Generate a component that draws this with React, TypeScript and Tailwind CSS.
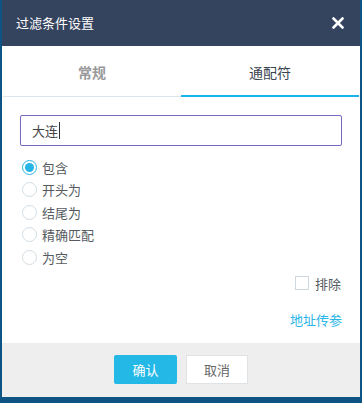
import React from 'react';

const font = { fontFamily: '"Noto Sans CJK SC", "Liberation Sans", sans-serif' };

const options = ['包含', '开头为', '结尾为', '精确匹配', '为空'];

const Radio = ({ checked, label }: { checked?: boolean; label: string }) => (
  <label className="flex items-center h-[22.5px] gap-[5px]">
    <span
      className={`w-[15px] h-[15px] rounded-full border flex items-center justify-center bg-white ${
        checked ? 'border-[#27b5e6]' : 'border-[#d3dde2]'
      }`}
    >
      {checked && <span className="w-[9px] h-[9px] rounded-full bg-[#27b5e6]" />}
    </span>
    <span className="text-[13px] text-[#555b61] leading-none">{label}</span>
  </label>
);

export default function App() {
  return (
    <div className="w-[362px] h-[403px] bg-[#0d5485] flex flex-col overflow-hidden" style={font}>
      <div className="mx-[2px] h-[397px] bg-white flex flex-col">
        {/* header */}
        <div className="h-[46px] bg-[#35445e] flex items-center justify-between pl-[14px] pr-[15px]">
          <span className="text-white text-[13px]">过滤条件设置</span>
          <svg width="12" height="12" viewBox="0 0 12 12" className="mr-[1px]">
            <path d="M1.5 1.5 L10.5 10.5 M10.5 1.5 L1.5 10.5" stroke="#fff" strokeWidth="2.6" strokeLinecap="round" />
          </svg>
        </div>

        {/* tabs */}
        <div className="flex h-[51px] mx-[1px]">
          <div className="flex-1 flex items-center justify-center border-b border-[#dde5ea] text-[14px] text-[#999] font-bold pt-[3px]">
            常规
          </div>
          <div className="flex-1 flex items-center justify-center border-b-2 border-[#1ab3ec] text-[14px] text-[#3a4550] pt-[4px]">
            通配符
          </div>
        </div>

        {/* body */}
        <div className="flex-1 flex flex-col px-[18px] pt-[18px]">
          <div className="h-[31px] border border-[#7767c1] rounded-[2px] flex items-center pl-[11px] text-[13px] text-[#444]">
            大连<span className="w-px h-[17px] bg-[#333] ml-[1px]" />
          </div>

          <div className="flex flex-col mt-[10px] pl-[2px]">
            {options.map((o, i) => (
              <Radio key={o} label={o} checked={i === 0} />
            ))}
          </div>

          <div className="flex justify-end items-center gap-[6px] mt-[5px] pr-[1px]">
            <span className="w-[14px] h-[14px] border border-[#cfd9dd] bg-white" />
            <span className="text-[13px] text-[#555b61]">排除</span>
          </div>

          <div className="flex justify-end mt-[17px]">
            <span className="text-[13px] text-[#2bb5e8]">地址传参</span>
          </div>
        </div>

        {/* footer */}
        <div className="h-[54px] bg-[#eeeeee] flex items-center justify-center gap-[9px] pb-[1px]">
          <button className="w-[63px] h-[29px] bg-[#23b8e6] rounded-[2px] text-white text-[13px]">确认</button>
          <button className="w-[62px] h-[29px] bg-white border border-[#dfe3e5] text-[#666] text-[13px]">取消</button>
        </div>
      </div>
    </div>
  );
}
